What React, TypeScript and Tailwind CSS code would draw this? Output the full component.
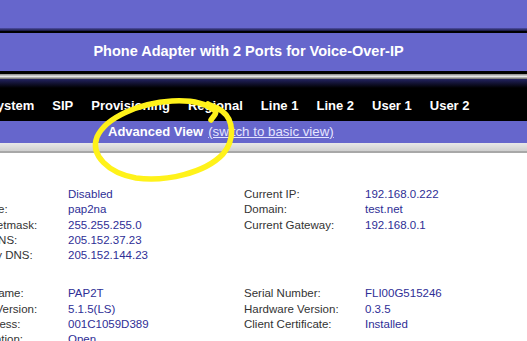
import React from "react";

const navItems = ["System", "SIP", "Provisioning", "Regional", "Line 1", "Line 2", "User 1", "User 2"];

const netRows = [
  ["DHCP:", "Disabled", "Current IP:", "192.168.0.222"],
  ["Host Name:", "pap2na", "Domain:", "test.net"],
  ["Current Netmask:", "255.255.255.0", "Current Gateway:", "192.168.0.1"],
  ["Primary DNS:", "205.152.37.23", "", ""],
  ["Secondary DNS:", "205.152.144.23", "", ""],
];

const productRows = [
  ["Product Name:", "PAP2T", "Serial Number:", "FLI00G515246"],
  ["Software Version:", "5.1.5(LS)", "Hardware Version:", "0.3.5"],
  ["MAC Address:", "001C1059D389", "Client Certificate:", "Installed"],
  ["Customization:", "Open", "", ""],
];

function InfoTable({ rows }: { rows: string[][] }) {
  return (
    <div className="ml-[-53px] grid grid-cols-[121px_176px_121px_1fr] text-[11.5px] leading-[15.25px] whitespace-nowrap">
      {rows.map((r, i) => (
        <React.Fragment key={i}>
          <div className="text-[#333]">{r[0]}</div>
          <div className="text-[#2e2e96]">{r[1]}</div>
          <div className="text-[#333]">{r[2]}</div>
          <div className="text-[#2e2e96]">{r[3]}</div>
        </React.Fragment>
      ))}
    </div>
  );
}

export default function App() {
  return (
    <div className="relative w-[527px] h-[341px] overflow-hidden bg-white font-['Liberation_Sans',Arial,sans-serif]">
      {/* header */}
      <div className="h-[28px] bg-[#6666cc]" />
      <div className="h-[3px] bg-gradient-to-b from-[#5050a8] to-[#15153a]" />
      <div className="h-[2px] bg-black" />
      <div className="h-[38px] bg-[#6666cc] flex items-center justify-center pr-[30px] text-white font-bold text-[14.5px]">
        Phone Adapter with 2 Ports for Voice-Over-IP
      </div>
      <div className="h-[3px] bg-black" />
      <div className="h-[5px] bg-gradient-to-b from-[#8a8a8a] via-[#e6e6e6] to-[#6a6a6a]" />

      {/* tabs */}
      <div className="h-[42px] bg-[linear-gradient(#232360,#000_9px)] flex items-center gap-[18px] ml-[-12px] pt-[12px] text-white font-bold text-[13px] whitespace-nowrap">
        {navItems.map((item) => (
          <span key={item}>{item}</span>
        ))}
      </div>

      {/* view switch */}
      <div className="h-[22px] bg-[#6666cc] flex items-center pl-[108px] text-[13px] whitespace-nowrap">
        <span className="font-bold text-white">Advanced View</span>
        <span className="ml-[5px] text-[#e4e4ff] text-[13.3px] underline">(switch to basic view)</span>
      </div>
      <div className="h-[10px] bg-gradient-to-b from-[#e8e8e8] to-[#cfcfcf] border-b-2 border-[#a8a8a8]" />

      {/* content */}
      <div className="pt-[34px]">
        <InfoTable rows={netRows} />
        <div className="mt-[23px]">
          <InfoTable rows={productRows} />
        </div>
      </div>

      {/* hand-drawn highlight */}
      <svg className="absolute inset-0 pointer-events-none" width="527" height="341" viewBox="0 0 527 341">
        <path
          d="M 211 120 C 214 115, 218 113, 214 110 C 205 103, 190 100, 172 101 C 140 103, 106 117, 97 137 C 90 155, 108 173, 136 178 C 166 182, 205 173, 223 154 C 235 140, 234 120, 222 111 C 217 107, 211 106, 208 104"
          fill="none"
          stroke="#fff21a"
          strokeWidth="5.5"
          strokeLinecap="round"
          strokeLinejoin="round"
        />
      </svg>
    </div>
  );
}
